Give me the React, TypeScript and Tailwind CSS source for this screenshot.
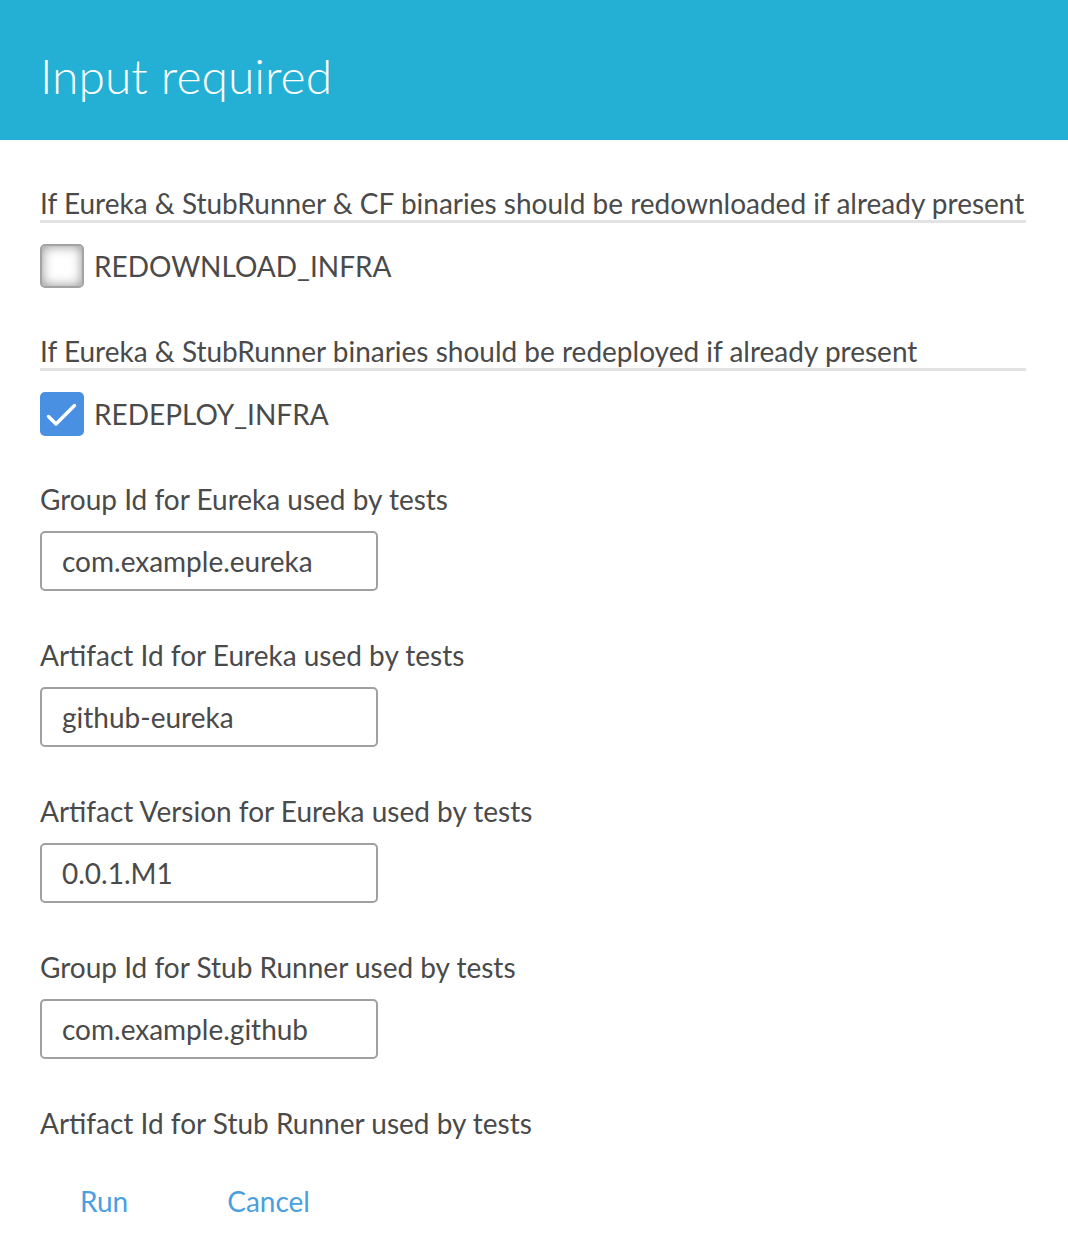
const fields = [
  { label: 'Group Id for Eureka used by tests', value: 'com.example.eureka' },
  { label: 'Artifact Id for Eureka used by tests', value: 'github-eureka' },
  { label: 'Artifact Version for Eureka used by tests', value: '0.0.1.M1' },
  { label: 'Group Id for Stub Runner used by tests', value: 'com.example.github' },
]

function Checkbox({ checked }: { checked: boolean }) {
  if (checked) {
    return (
      <div className="w-[44px] h-[44px] rounded-[5px] bg-[#4a90e2] shrink-0">
        <svg width="44" height="44" viewBox="0 0 44 44" fill="none">
          <path d="M8.5 24.5 L16 32 L34.5 13.5" stroke="white" strokeWidth="3.4" strokeLinecap="round" strokeLinejoin="round" />
        </svg>
      </div>
    )
  }
  return (
    <div className="w-[44px] h-[44px] rounded-[5px] border-2 border-[#a3a3a3] bg-white shadow-[inset_0_0_12px_rgba(0,0,0,0.45)] shrink-0" />
  )
}

export default function App() {
  return (
    <div className="w-[1068px] min-h-[1254px] bg-white font-['Lato',sans-serif] text-[#4a4a4a]">
      <div className="h-[140px] bg-[#24b0d5] flex items-center px-[40px]">
        <h1 className="text-[48px] font-light text-white leading-none pt-[12px]">Input required</h1>
      </div>

      <div className="px-[40px] pr-[42px] pt-[47px]">
        <div className="text-[28px] leading-[32px] border-b-[3px] border-[#e3e3e3] pb-[1px]">
          If Eureka &amp; StubRunner &amp; CF binaries should be redownloaded if already present
        </div>
        <div className="flex items-center gap-[10px] mt-[21px]">
          <Checkbox checked={false} />
          <span className="text-[28px]">REDOWNLOAD_INFRA</span>
        </div>

        <div className="text-[28px] leading-[32px] border-b-[3px] border-[#e3e3e3] pb-[1px] mt-[47px]">
          If Eureka &amp; StubRunner binaries should be redeployed if already present
        </div>
        <div className="flex items-center gap-[10px] mt-[21px]">
          <Checkbox checked={true} />
          <span className="text-[28px]">REDEPLOY_INFRA</span>
        </div>

        {fields.map((f, i) => (
          <div key={f.label} className={i === 0 ? 'mt-[47px]' : 'mt-[48px]'}>
            <div className="text-[28px] leading-[32px]">{f.label}</div>
            <div className="mt-[16px] w-[338px] h-[60px] rounded-[5px] border-2 border-[#a0a0a0] flex items-center px-[20px] text-[28px]">
              {f.value}
            </div>
          </div>
        ))}

        <div className="mt-[48px] text-[28px] leading-[32px]">Artifact Id for Stub Runner used by tests</div>

        <div className="flex items-center mt-[41px] pl-[40px] gap-[99px] text-[28px] text-[#4a9fe0]">
          <span>Run</span>
          <span>Cancel</span>
        </div>
      </div>
    </div>
  )
}
